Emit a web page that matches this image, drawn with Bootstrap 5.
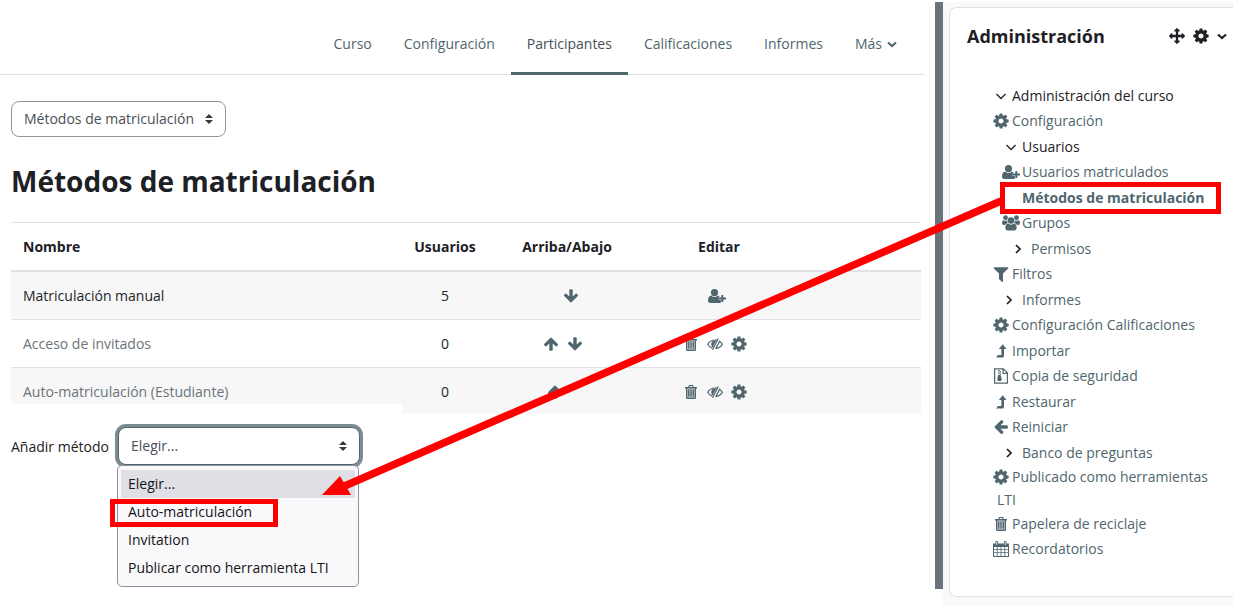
<!DOCTYPE html>
<html lang="es">
<head>
<meta charset="utf-8">
<meta name="viewport" content="width=device-width, initial-scale=1">
<title>Métodos de matriculación</title>
<link href="https://cdn.jsdelivr.net/npm/bootstrap@5.3.0/dist/css/bootstrap.min.css" rel="stylesheet">
<style>
  :root { --ink: #1d2125; --slate: #4f666e; --alert: #ff0000; }
  body { font-family: "Open Sans", "Noto Sans", sans-serif; font-size: 14px; line-height: 23px; color: var(--ink); background: #fff; }
  svg { fill: currentColor; }
  .page-head { height: 75px; border-bottom: 1px solid #dee2e6; margin-right: 10px; padding-right: 11px; }
  .course-tabs .nav-link { color: var(--slate); padding: 15px 16px 0; height: 75px; display: flex; align-items: center; border-bottom: 3px solid transparent; }
  .course-tabs .nav-link.active { color: #495057; border-bottom-color: var(--slate); }
  .course-main { padding: 26px 14px 0 11px; }
  .moodle-select { font-size: 14px; line-height: 22px; height: 36px; color: #495057; border: 1px solid #8f959e; border-radius: 8px; padding: 0 30px 0 12px;
    background-image: url("data:image/svg+xml,%3Csvg xmlns='http://www.w3.org/2000/svg' viewBox='0 0 4 5'%3E%3Cpath fill='%23343a40' d='M2 0L0 2h4zm0 5L0 3h4z'/%3E%3C/svg%3E"); background-size: 8px 10px; background-position: right 12px center; }
  .page-title { font-size: 28px; line-height: 36px; font-weight: 700; margin: 26px 0 23px; }
  .methods { table-layout: fixed; --bs-table-striped-bg: #f7f7f7; margin: 0; color: var(--ink); border-color: #dee2e6; }
  .methods th, .methods td { padding: 12px; border-top: 1px solid #dee2e6; border-bottom: 0; }
  .methods thead th { border-bottom: 2px solid #dee2e6; }
  .methods tbody tr:first-child td { border-top: 0; }
  .methods tbody tr:last-child td { padding-bottom: 11px; }
  .methods tbody tr > td.off { color: #6a737b; --bs-table-striped-color: #6a737b; }
  .methods a { color: var(--slate); }
  .methods svg { width: 16px; height: 16px; display: inline-block; vertical-align: -3px; }
  .methods svg.wide { width: 18px; }
  .col-users { width: 86px; } .col-move { width: 158px; } .col-edit { width: 146px; } .col-rest { width: 129px; }
  .add-method { position: relative; width: 391px; margin-top: -10px; padding-top: 23px; background: #fff; }
  .add-method label { flex: 0 0 107px; }
  .add-method .moodle-select { height: 38px; width: 242px; border-color: var(--slate); box-shadow: 0 0 0 3px #7c8c93; }
  .choices { position: absolute; left: 106px; top: 61px; width: 242px; height: 122px; padding: 4px 3px; background: #f9f9fb; border: 1px solid #8f8f9d; border-radius: 5px; margin: 0; }
  .choices li { line-height: 28px; padding-left: 7px; position: relative; color: #15141a; }
  .choices .chosen { background: #e0dfe6; }
  .choices .flagged::after { content: ""; position: absolute; left: -11px; top: 1px; width: 168px; height: 28px; border: 5px solid var(--alert); }
  .drawer { width: 298px; flex: none; margin-top: 2px; overflow: hidden; }
  .drawer-bar { width: 8px; flex: none; background: #6a737b; margin-bottom: 17px; }
  .drawer-body { background: #f8f9fa; padding: 5px 0 9px 6px; flex: 1; }
  .block { border: 1px solid #dee2e6; border-right: 0; border-radius: 8px 0 0 8px; background: #fff; padding: 15px 6px 34px 17px; }
  .block h2 { font-size: 18px; line-height: 26px; font-weight: 700; margin: 0; }
  .block-tools svg { width: 16px; height: 16px; display: block; }
  .block-tools svg.fold { width: 10px; }
  .tree { margin: 34px 0 0; padding-left: 30px; }
  .tree li { line-height: 25px; text-indent: -5px; color: var(--ink); }
  .tree li:nth-child(even) { line-height: 26px; }
  .tree li.two-line { line-height: 23px; }
  .tree .lvl-2 { padding-left: 10px; } .tree .lvl-3 { padding-left: 19px; }
  .tree a { color: var(--slate); text-decoration: none; }
  .tree svg { width: 18px; height: 16px; margin-right: 2px; vertical-align: -3px; display: inline-block; }
  .tree .twisty { color: var(--ink); }
  .tree .blank { display: inline-block; width: 20px; }
  .tree .flagged { position: relative; }
  .tree .flagged::after { content: ""; position: absolute; left: 3px; top: -3px; width: 221px; height: 32px; border: 5px solid var(--alert); }
  .pointer { position: absolute; left: 0; top: 0; width: 100%; pointer-events: none; color: var(--alert); }
</style>
</head>
<body>
<svg class="d-none">
  <symbol id="cog" viewBox="90 90 1612 1612"><path d="M1152 896q0-106-75-181t-181-75-181 75-75 181 75 181 181 75 181-75 75-181zm512-109v222q0 12-8 23t-20 13l-185 28q-19 54-39 91 35 50 107 138 10 12 10 25t-9 23q-27 37-99 108t-94 71q-12 0-26-9l-138-108q-44 23-91 38-16 136-29 186-7 28-36 28h-222q-14 0-24.500-8.500t-11.500-21.500l-28-184q-49-16-90-37l-141 107q-10 9-25 9-14 0-25-11-126-114-165-168-7-10-7-23 0-12 8-23 15-21 51-66.500t54-70.500q-27-50-41-99l-183-27q-13-2-21-12.500t-8-23.500v-222q0-12 8-23t19-13l186-28q14-46 39-92-40-57-107-138-10-12-10-24 0-10 9-23 26-36 98.500-107.500t94.500-71.500q13 0 26 10l138 107q44-23 91-38 16-136 29-186 7-28 36-28h222q14 0 24.500 8.500t11.500 21.500l28 184q49 16 90 37l142-107q9-9 24-9 13 0 25 10 129 119 165 170 7 8 7 22 0 12-8 23-15 21-51 66.500t-54 70.500q26 50 41 98l183 28q13 2 21 12.500t8 23.500z"/></symbol>
  <symbol id="down" viewBox="0 0 1792 1792"><path d="M1675 832q0 53-37 90l-651 652q-39 37-91 37-53 0-90-37l-651-652q-38-36-38-90 0-53 38-91l74-75q39-37 91-37 53 0 90 37l294 294v-704q0-52 38-90t90-38h128q52 0 90 38t38 90v704l294-294q37-37 90-37 52 0 91 37l75 75q37 39 37 91z"/></symbol>
  <symbol id="up" viewBox="0 0 1792 1792"><use href="#down" width="1792" height="1792" transform="rotate(180 896 896)"/></symbol>
  <symbol id="left" viewBox="0 0 1792 1792"><use href="#down" width="1792" height="1792" transform="rotate(90 896 896)"/></symbol>
  <symbol id="arrows" viewBox="0 0 1792 1792"><path d="M1792 896q0 26-19 45l-256 256q-19 19-45 19t-45-19-19-45v-128h-384v384h128q26 0 45 19t19 45-19 45l-256 256q-19 19-45 19t-45-19l-256-256q-19-19-19-45t19-45 45-19h128v-384h-384v128q0 26-19 45t-45 19-45-19l-256-256q-19-19-19-45t19-45l256-256q19-19 45-19t45 19 19 45v128h384v-384h-128q-26 0-45-19t-19-45 19-45l256-256q19-19 45-19t45 19l256 256q19 19 19 45t-19 45-45 19h-128v384h384v-128q0-26 19-45t45-19 45 19l256 256q19 19 19 45z"/></symbol>
  <symbol id="filter" viewBox="130 130 1532 1532"><path d="M1595 295q17 41-14 70l-493 493v742q0 42-39 59-13 5-25 5-27 0-45-19l-256-256q-19-19-19-45v-486l-493-493q-31-29-14-70 17-39 59-39h1280q42 0 59 39z"/></symbol>
  <symbol id="trash" viewBox="0 0 16 16"><path fill-rule="evenodd" d="M5.500 3V1.800q0-.8.8-.8h3.400q.8 0 .8.800V3H14v1.500h-1v9q0 1.500-1.500 1.500h-7Q3 15 3 13.500v-9H2V3zm1.200 0h2.600v-.9H6.700zM4.300 4.500v9h7.400v-9zM5 5.500h1.200v7H5zm2.400 0h1.200v7H7.400zm2.400 0H11v7H9.800z"/><path opacity=".45" d="M4.300 4.500h7.400v9H4.300z"/></symbol>
  <symbol id="eye" viewBox="0 0 16 16"><g fill="none" stroke="currentColor" stroke-width="1.200"><path d="M5.200 12.200Q2.300 11 .6 8.300 3.300 4 8 4q1 0 1.900.2M12.300 5.300Q14.300 6.500 15.400 8.300 13 12 8.500 12.600M11.300 2.500 5.500 13.800M13 4.500 8.800 12.600"/><path d="M8 5.300Q5 5.500 5 8.500q0 1.300 1 2.300"/></g><path d="M9.400 4.200 5.600 11.500Q3.700 7.500 5.200 5.500z"/></symbol>
  <symbol id="userplus" viewBox="0 0 18 16"><circle cx="6.500" cy="4.600" r="3.600"/><path d="M3.300 7.500Q4.500 9 6.500 9t3.200-1.500q1.300.2 1.900 1.500h-1v3h2.200v2.500q-.4.500-1.300.5h-9Q0 15 0 12.500 0 8 3.300 7.500zM13.300 7h2v2.500H18v2h-2.700V14h-2v-2.500h-2.600v-2h2.600z"/></symbol>
  <symbol id="users" viewBox="0 0 18 16"><circle cx="9" cy="5.500" r="3.300"/><circle cx="3.500" cy="2.700" r="2.400"/><circle cx="14.500" cy="2.700" r="2.400"/><path d="M6 8.500Q9 10.800 12 8.500q2.600.5 2.600 4.300 0 2.700-2.400 2.700H5.800q-2.400 0-2.400-2.700Q3.400 9 6 8.500zM1.500 5.200q1.700 1 3.600.2Q5 7 5.800 8 3.800 8.300 3 10H2Q0 10 0 8q0-2.500 1.500-2.800zM16.500 5.200q-1.700 1-3.600.2.100 1.600-.7 2.600 2 .3 2.800 2h1q2 0 2-2 0-2.500-1.500-2.800z"/></symbol>
  <symbol id="levelup" viewBox="0 0 16 16"><path d="M3 14.500h6.500q1.500 0 1.500-1.500V6h2.500L9.700 1.300 5.800 6h2.600v6H5z"/></symbol>
  <symbol id="zip" viewBox="0 0 16 16"><path fill="none" stroke="currentColor" stroke-width="1.200" d="M1.600.8h8.800l4 4v10.400H1.600zM10 .8v4.600h4.400"/><path d="M5 2h1.500v1.200H5zM6.500 3.200H8v1.200H6.500zM5 4.400h1.500v1.200H5zM6.500 5.600H8v1.200H6.500zM5.200 7h2.400l1.200 4.200q0 2-2.300 2T4.200 11.200z"/></symbol>
  <symbol id="calendar" viewBox="0 0 16 16"><path fill-rule="evenodd" d="M0 2.500h2.500V1q0-1 1-1h.6q1 0 1 1v1.500h5.800V1q0-1 1-1h.6q1 0 1 1v1.500H16V16H0zM1 6v2h2.800V6zm3.600 0v2h3V6zm3.800 0v2h3V6zm3.800 0v2H15V6zM1 8.800v2.500h2.800V8.800zm3.600 0v2.500h3V8.800zm3.800 0v2.500h3V8.800zm3.800 0v2.500H15V8.800zM1 12.100V15h2.800v-2.900zm3.600 0V15h3v-2.900zm3.800 0V15h3v-2.900zm3.800 0V15H15v-2.900zM3.400 1v3h.8V1zm8.400 0v3h.8V1z"/></symbol>
  <symbol id="open" viewBox="0 0 16 16"><path fill="none" stroke="currentColor" stroke-width="1.300" d="m3.500 6 4.500 4.500L12.500 6"/></symbol>
  <symbol id="closed" viewBox="0 0 16 16"><path fill="none" stroke="currentColor" stroke-width="1.700" d="m4 4 4 4-4 4"/></symbol>
  <symbol id="caret" viewBox="0 0 16 16"><path fill="none" stroke="currentColor" stroke-width="2.200" d="m4 6.500 4 3.500 4-3.500"/></symbol>
</svg>

<div class="d-flex position-relative align-items-start">
  <div class="flex-grow-1">
    <header class="page-head d-flex">
      <nav class="ms-auto" aria-label="Curso">
        <ul class="nav course-tabs flex-nowrap">
          <li class="nav-item"><a class="nav-link" href="#">Curso</a></li>
          <li class="nav-item"><a class="nav-link" href="#">Configuración</a></li>
          <li class="nav-item"><a class="nav-link active" aria-current="page" href="#">Participantes</a></li>
          <li class="nav-item"><a class="nav-link" href="#">Calificaciones</a></li>
          <li class="nav-item"><a class="nav-link" href="#">Informes</a></li>
          <li class="nav-item"><a class="nav-link" href="#">Más<svg class="ms-1" width="12" height="16" viewBox="2 0 12 16" aria-hidden="true"><use href="#caret" width="16" height="16"/></svg></a></li>
        </ul>
      </nav>
    </header>
    <main class="course-main">
      <select class="form-select moodle-select w-auto" aria-label="Sección"><option>Métodos de matriculación</option></select>
      <h1 class="page-title">Métodos de matriculación</h1>
      <table class="table table-striped methods">
        <colgroup><col><col class="col-users"><col class="col-move"><col class="col-edit"><col class="col-rest"></colgroup>
        <thead>
          <tr><th scope="col">Nombre</th><th scope="col" class="text-center">Usuarios</th><th scope="col" class="text-center">Arriba/Abajo</th><th scope="col" class="text-center">Editar</th><th></th></tr>
        </thead>
        <tbody>
          <tr><td>Matriculación manual</td><td class="text-center">5</td>
            <td><div class="d-flex justify-content-center"><a href="#" aria-label="Abajo" class="ms-2"><svg><use href="#down"/></svg></a></div></td>
            <td><div class="d-flex justify-content-center"><a href="#" aria-label="Matricular usuarios" class="me-1"><svg class="wide"><use href="#userplus"/></svg></a></div></td><td></td></tr>
          <tr><td class="off">Acceso de invitados</td><td class="text-center">0</td>
            <td><div class="d-flex justify-content-center"><a href="#" aria-label="Arriba" class="me-2"><svg><use href="#up"/></svg></a><a href="#" aria-label="Abajo" class="me-2"><svg><use href="#down"/></svg></a></div></td>
            <td><div class="d-flex justify-content-center"><a href="#" aria-label="Borrar" class="me-2"><svg><use href="#trash"/></svg></a><a href="#" aria-label="Habilitar" class="me-2"><svg><use href="#eye"/></svg></a><a href="#" aria-label="Editar" class="me-2"><svg><use href="#cog"/></svg></a></div></td><td></td></tr>
          <tr><td class="off">Auto-matriculación (Estudiante)</td><td class="text-center">0</td>
            <td><div class="d-flex justify-content-center"><a href="#" aria-label="Arriba" class="me-4"><svg><use href="#up"/></svg></a></div></td>
            <td><div class="d-flex justify-content-center"><a href="#" aria-label="Borrar" class="me-2"><svg><use href="#trash"/></svg></a><a href="#" aria-label="Habilitar" class="me-2"><svg><use href="#eye"/></svg></a><a href="#" aria-label="Editar" class="me-2"><svg><use href="#cog"/></svg></a></div></td><td></td></tr>
        </tbody>
      </table>
      <form class="add-method">
        <div class="d-flex align-items-center">
          <label for="method" class="text-nowrap">Añadir método</label>
          <select id="method" class="form-select moodle-select"><option>Elegir...</option><option>Auto-matriculación</option><option>Invitation</option><option>Publicar como herramienta LTI</option></select>
        </div>
        <ul class="choices list-unstyled" role="listbox" aria-label="Añadir método">
          <li class="chosen" role="option" aria-selected="true">Elegir...</li>
          <li class="flagged" role="option">Auto-matriculación</li>
          <li role="option">Invitation</li>
          <li role="option">Publicar como herramienta LTI</li>
        </ul>
      </form>
    </main>
  </div>

  <aside class="drawer d-flex">
    <div class="drawer-bar"></div>
    <div class="drawer-body">
      <section class="block">
        <div class="d-flex align-items-center">
          <h2 class="me-auto">Administración</h2>
          <div class="block-tools d-flex gap-2">
            <svg><use href="#arrows"/></svg><svg><use href="#cog"/></svg><svg class="fold" viewBox="3 0 10 16"><use href="#caret" width="16" height="16"/></svg>
          </div>
        </div>
        <ul class="tree list-unstyled">
          <li><svg class="twisty"><use href="#open"/></svg>Administración del curso</li>
          <li><a href="#"><svg><use href="#cog"/></svg>Configuración</a></li>
          <li class="lvl-2"><svg class="twisty"><use href="#open"/></svg>Usuarios</li>
          <li class="lvl-2"><a href="#"><svg><use href="#userplus"/></svg>Usuarios matriculados</a></li>
          <li class="lvl-2 flagged"><a href="#" class="fw-bold"><span class="blank"></span>Métodos de matriculación</a></li>
          <li class="lvl-2"><a href="#"><svg><use href="#users"/></svg>Grupos</a></li>
          <li class="lvl-3"><a href="#"><svg class="twisty"><use href="#closed"/></svg>Permisos</a></li>
          <li><a href="#"><svg><use href="#filter"/></svg>Filtros</a></li>
          <li class="lvl-2"><a href="#"><svg class="twisty"><use href="#closed"/></svg>Informes</a></li>
          <li><a href="#"><svg><use href="#cog"/></svg>Configuración Calificaciones</a></li>
          <li><a href="#"><svg><use href="#levelup"/></svg>Importar</a></li>
          <li><a href="#"><svg><use href="#zip"/></svg>Copia de seguridad</a></li>
          <li><a href="#"><svg><use href="#levelup"/></svg>Restaurar</a></li>
          <li><a href="#"><svg><use href="#left"/></svg>Reiniciar</a></li>
          <li class="lvl-2"><a href="#"><svg class="twisty"><use href="#closed"/></svg>Banco de preguntas</a></li>
          <li class="two-line"><a href="#"><svg><use href="#cog"/></svg>Publicado como herramientas LTI</a></li>
          <li><a href="#"><svg><use href="#trash"/></svg>Papelera de reciclaje</a></li>
          <li><a href="#"><svg><use href="#calendar"/></svg>Recordatorios</a></li>
        </ul>
      </section>
    </div>
  </aside>

  <svg class="pointer" viewBox="0 0 1233 612" aria-hidden="true"><path d="M1001 201 340 488" stroke="currentColor" stroke-width="7.500"/><path d="m322 495 18-19 11 19z"/></svg>
</div>
<script src="https://cdn.jsdelivr.net/npm/bootstrap@5.3.0/dist/js/bootstrap.bundle.min.js"></script>
</body>
</html>
